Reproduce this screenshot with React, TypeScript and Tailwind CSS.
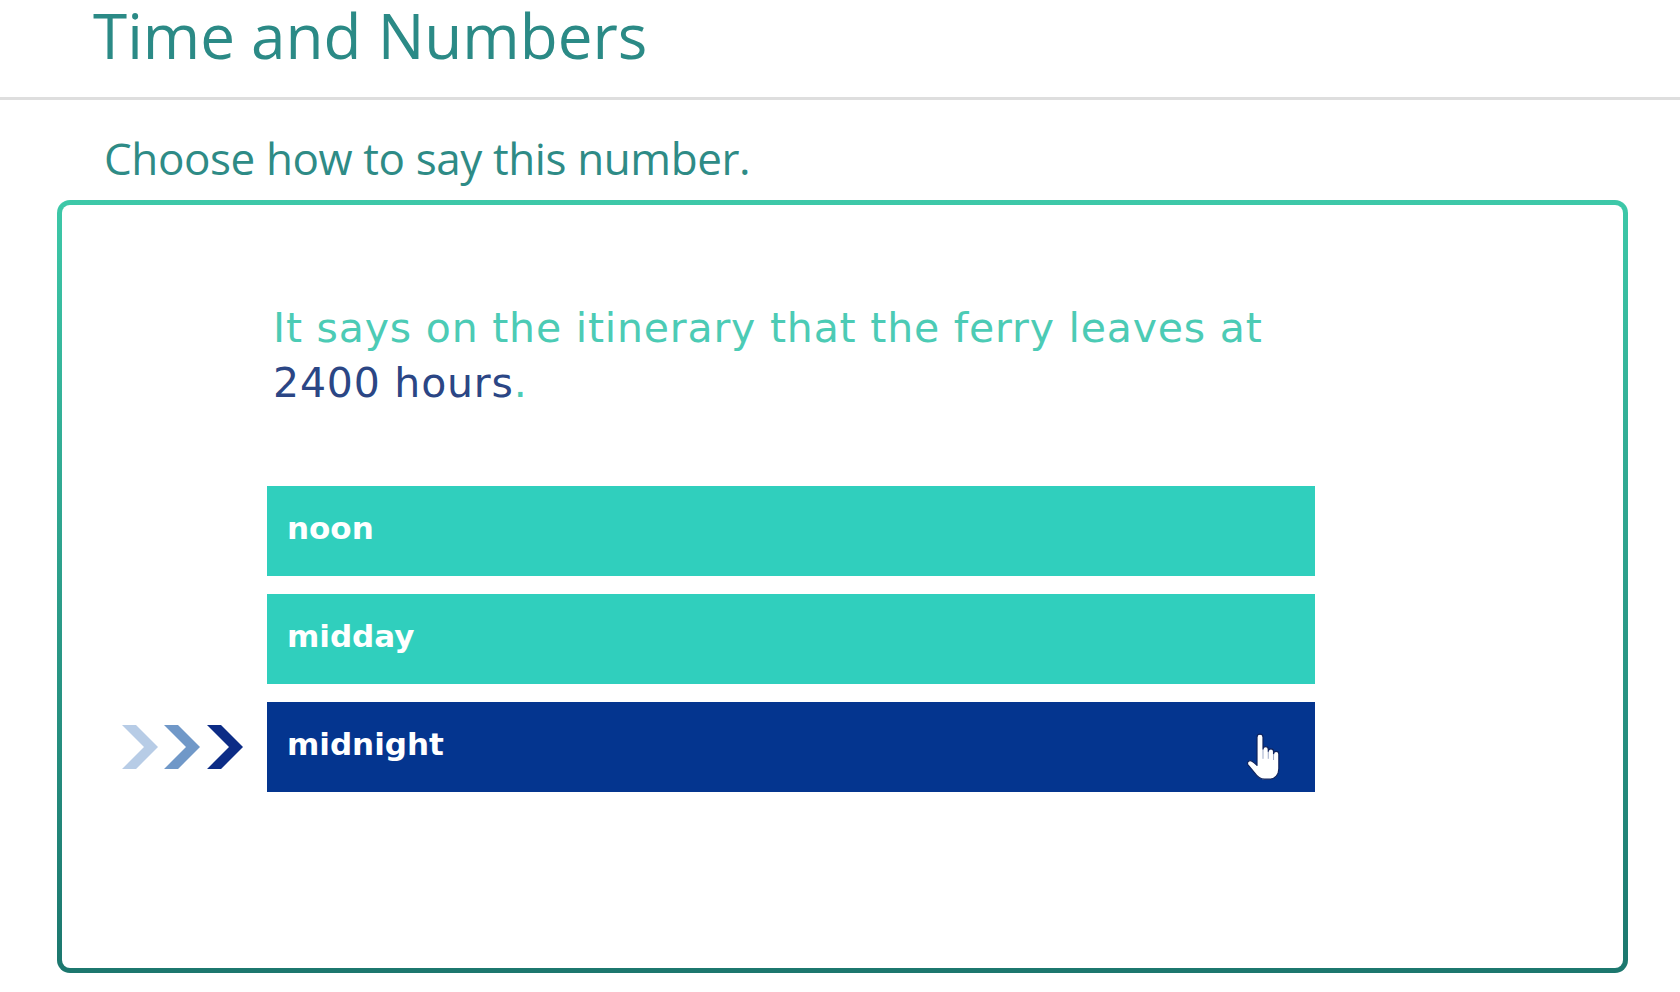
const options = [
    { label: 'noon', selected: false },
    { label: 'midday', selected: false },
    { label: 'midnight', selected: true },
];

const Chevrons: React.FC = () => (
    <svg width="123" height="44" viewBox="0 0 123 44">
        <polygon points="0,0 14,0 36,22 14,44 0,44 22,22" fill="#b7cce6" />
        <polygon points="42,0 56,0 78,22 56,44 42,44 64,22" fill="#7098c8" />
        <polygon points="85,0 99,0 121,22 99,44 85,44 107,22" fill="#0c2c86" />
    </svg>
);

const HandCursor: React.FC = () => (
    <svg className="absolute left-[978px] top-[30px]" width="36" height="50" viewBox="0 0 30 41">
        <path
            d="M10 4 a2.5 2.5 0 0 1 5 0 V14 a2.2 2.2 0 0 1 4.4 0 V16 a2.2 2.2 0 0 1 4.4 0 V18 a2.2 2.2 0 0 1 4.4 0 V30 c0 5 -3 9 -8 9 h-4 c-4 0 -6 -2 -8 -5 L2.5 27 c-1 -1.5 0 -3.5 2 -3.5 c1.2 0 2.5 1 5.5 4 Z"
            fill="#ffffff"
            stroke="#10245e"
            strokeWidth="1"
            strokeLinejoin="round"
        />
        <path d="M15 14 V22 M19.4 16 V22 M23.8 18 V23" stroke="#9aa6c4" strokeWidth="0.8" fill="none" />
    </svg>
);

const App: React.FC = () => {
    return (
        <div className="min-h-screen bg-white">
            <header className="pl-[93px] pb-[27px]">
                <h1 className="font-['Open_Sans',sans-serif] text-[62px] leading-[70px] text-[#2b8a86]">
                    Time and Numbers
                </h1>
            </header>
            <div className="h-[3px] bg-[#dedede]" />

            <p className="mt-[32px] pl-[104px] font-['Open_Sans',sans-serif] text-[44px] leading-[52px] tracking-[-0.4px] text-[#2e8b86]">
                Choose how to say this number.
            </p>

            <div className="mt-[16px] ml-[57px] h-[773px] w-[1571px] rounded-[13px] bg-linear-to-b from-[#3dc8a8] to-[#1c776e] p-[5px]">
                <div className="h-full rounded-[8px] bg-white pl-[60px] pt-[96px]">
                    <div className="pl-[145px]">
                        <p className="pl-[6px] font-['DejaVu_Sans',sans-serif] text-[41px] leading-[55px] tracking-[0.8px] text-[#4ccbb5]">
                            It says on the itinerary that the ferry leaves at
                            <br />
                            <span className="text-[#2b4685]">2400 hours</span>.
                        </p>
                    </div>

                    <div className="mt-[75px] flex flex-col gap-[18px]">
                        {options.map((option) => (
                            <div key={option.label} className="flex items-center">
                                <div className="mr-[22px] flex w-[123px] items-center">
                                    {option.selected && <Chevrons />}
                                </div>
                                <div
                                    className={
                                        option.selected
                                            ? "relative flex h-[90px] w-[1048px] items-center bg-[#04358f] pb-[6px] pl-[20px] font-['DejaVu_Sans',sans-serif] text-[31px] font-bold text-white"
                                            : "relative flex h-[90px] w-[1048px] items-center bg-[#30cfbd] pb-[6px] pl-[20px] font-['DejaVu_Sans',sans-serif] text-[31px] font-bold text-white"
                                    }
                                >
                                    {option.label}
                                    {option.selected && <HandCursor />}
                                </div>
                            </div>
                        ))}
                    </div>
                </div>
            </div>
        </div>
    );
};

export default App;
